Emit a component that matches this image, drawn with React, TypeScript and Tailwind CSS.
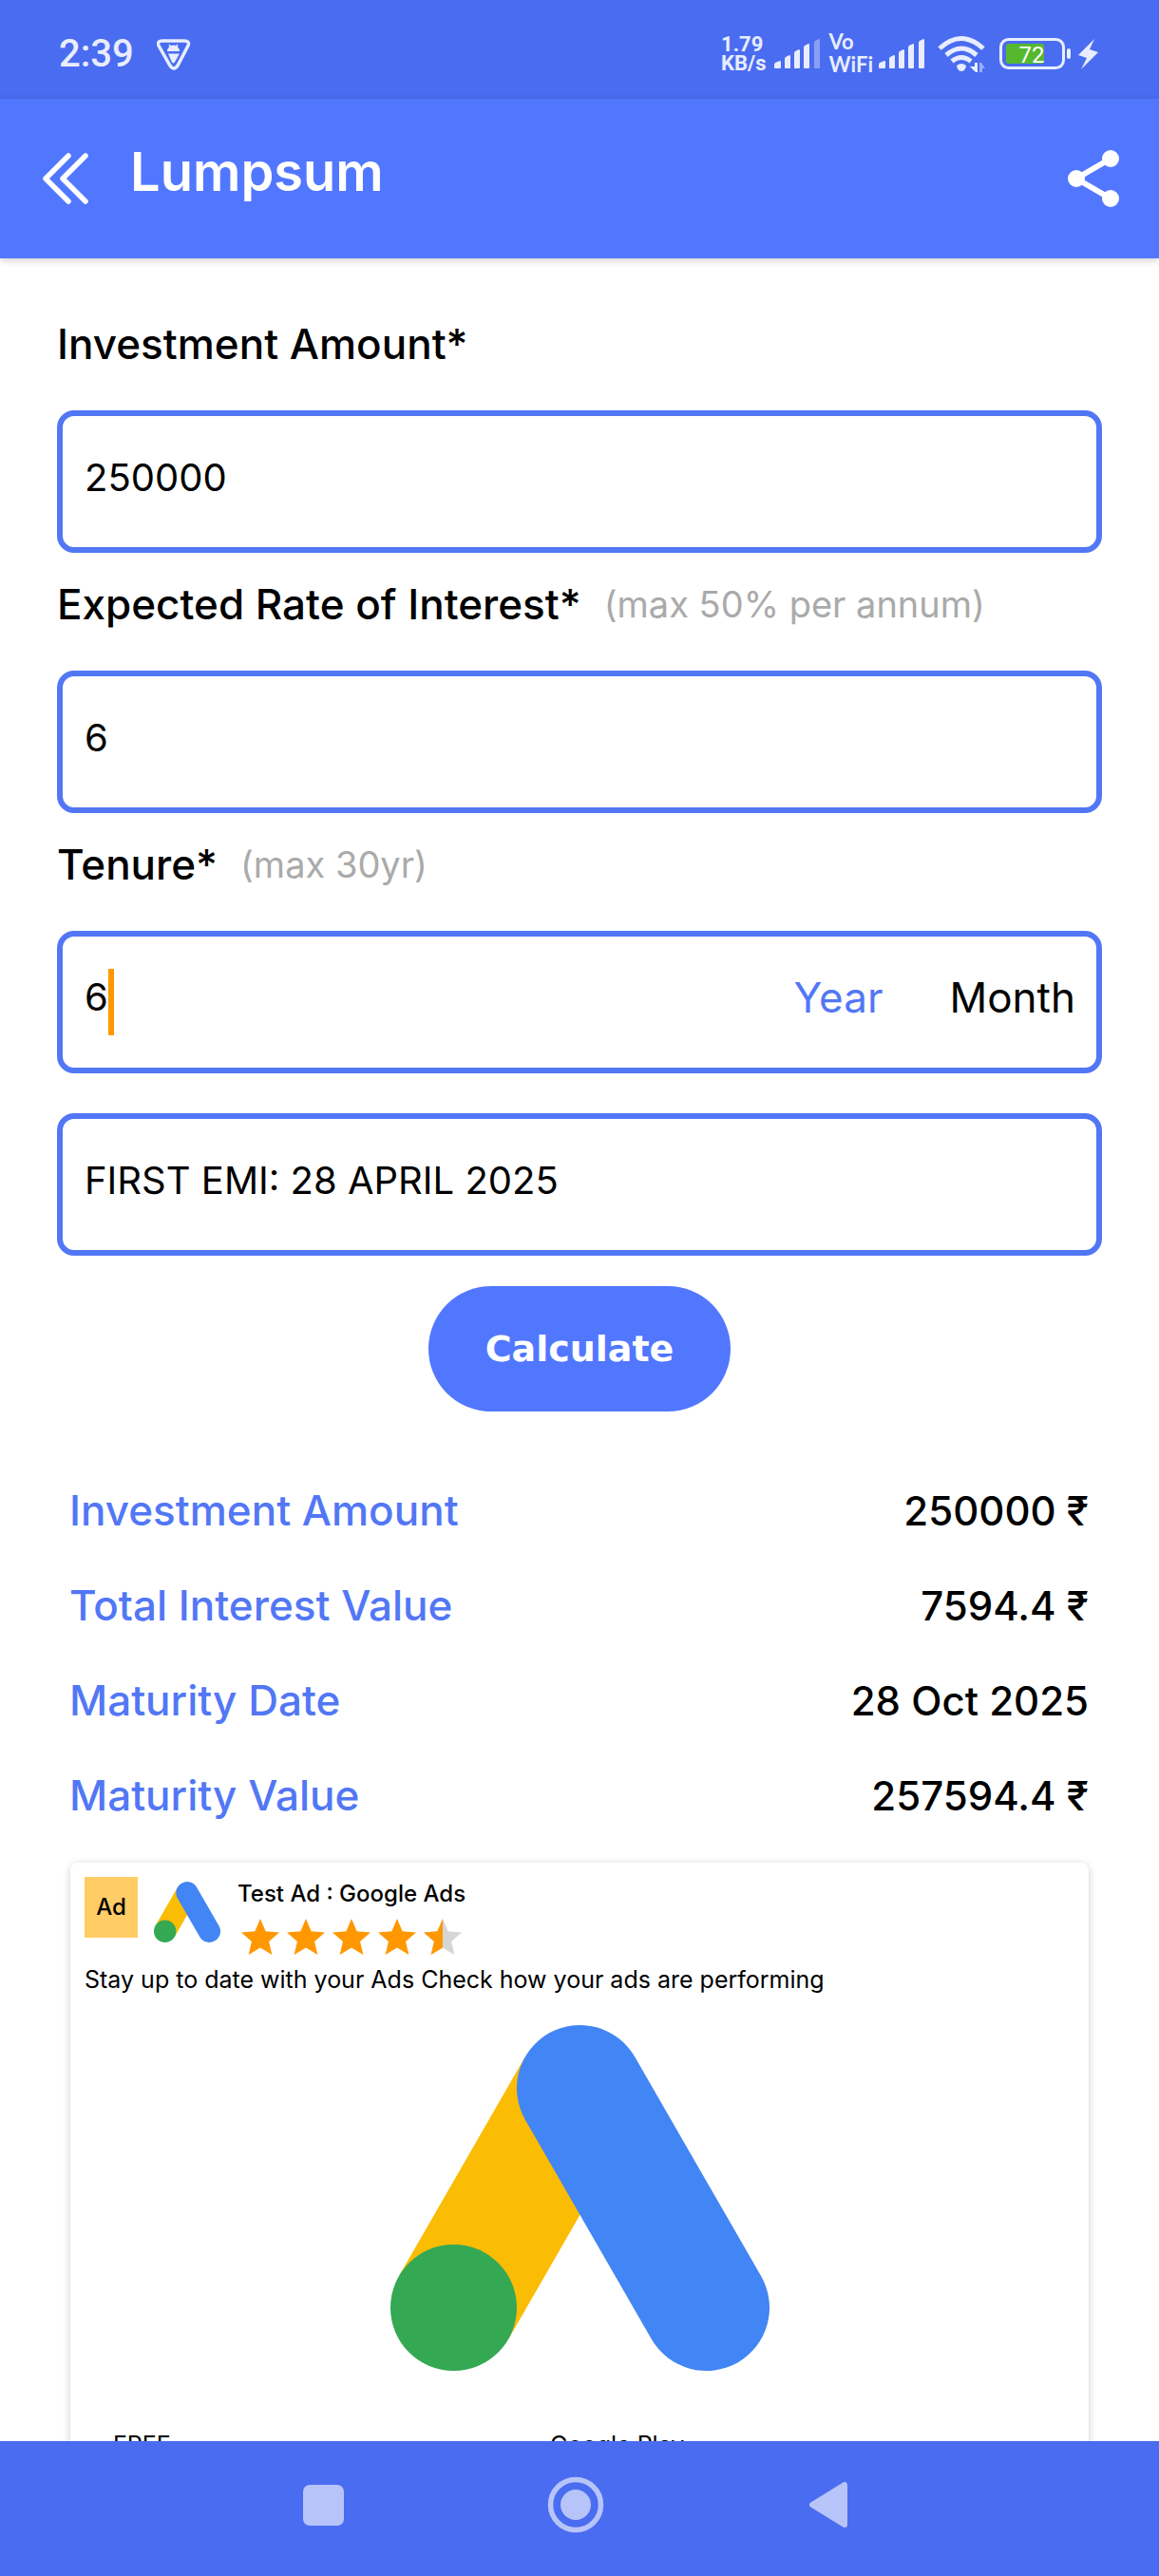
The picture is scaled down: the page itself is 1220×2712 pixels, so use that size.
import React, { useState } from 'react';

const results = [
  { label: 'Investment Amount', value: '250000 ₹' },
  { label: 'Total Interest Value', value: '7594.4 ₹' },
  { label: 'Maturity Date', value: '28 Oct 2025' },
  { label: 'Maturity Value', value: '257594.4 ₹' },
];

const SignalBars: React.FC<{ weak?: boolean }> = ({ weak }) => (
  <svg width="50" height="32" viewBox="0 0 50 32" fill="#e8edff" aria-hidden="true">
    <path d="M0 27q0-1 1-2l5-2q1 0 1 1v6q0 1-1 1H1q-1 0-1-1z" />
    <path d="M11 21q0-1 1-2l4-2q1 0 1 1v12q0 1-1 1h-4q-1 0-1-1z" />
    <path d="M21 15q0-1 1-2l4-2q1 0 1 1v18q0 1-1 1h-4q-1 0-1-1z" />
    <path d="M31 9q0-1 1-2l4-2q1 0 1 1v24q0 1-1 1h-4q-1 0-1-1z" />
    <path opacity={weak ? 0.4 : 1} d="M42 4q0-1 1-2l4-2q1 0 1 1v29q0 1-1 1h-4q-1 0-1-1z" />
  </svg>
);

const StatusBar: React.FC = () => (
  <div className="flex h-[104px] shrink-0 items-center justify-between bg-[#4a6cf0] pt-[10px] pr-[60px] pl-[62px] font-[Roboto,sans-serif] text-[#e8edff]">
    <div className="flex items-center gap-6">
      <span className="text-[40px] leading-[48px] font-medium">2:39</span>
      <svg width="36" height="33" viewBox="0 0 36 33" aria-hidden="true">
        <path
          d="M6 2h23q6 0 4 5L22 28q-4 6-8 0L2 7Q0 2 6 2z"
          fill="none"
          stroke="#e8edff"
          strokeWidth="3.5"
        />
        <path d="M11 13a6.500 6.500 0 0 1 13 0zM12 15.500h12l-5 9q-1.500 2-3 0z" fill="#e8edff" />
        <path d="M13 6l2 3M22 6l-2 3" stroke="#e8edff" strokeWidth="1.500" />
      </svg>
    </div>

    <div className="flex items-center">
      <div className="mr-2 flex flex-col text-[22px] leading-[20px] font-bold">
        <span>1.79</span>
        <span>KB/s</span>
      </div>
      <SignalBars weak />
      <div className="mr-[6px] ml-[8px] flex flex-col pb-[2px] font-[Lato,sans-serif] text-[22px] leading-[24px] font-bold">
        <span>Vo</span>
        <span>WiFi</span>
      </div>
      <SignalBars />
      <svg className="ml-3" width="52" height="40" viewBox="0 0 52 40" aria-hidden="true">
        <g fill="none" stroke="#e8edff" strokeWidth="5">
          <path d="M2 14q23-21 46 0" />
          <path d="M9 21q16-14 32 0" />
          <path d="M15 27.500q10-8 20 0" />
        </g>
        <path d="M20 32q5-4 10 0-1 6-5 6t-5-6z" fill="#e8edff" />
        <path d="M39 29h3v10h-2l-6-6h5z" fill="#e8edff" />
        <path d="M44 39V29h2l4 6h-3v4z" fill="#e8edff" opacity="0.5" />
      </svg>
      <svg className="ml-[13px]" width="108" height="34" viewBox="0 0 108 34" aria-hidden="true">
        <rect x="1.500" y="1.500" width="66" height="30" rx="8" fill="none" stroke="#e8edff" strokeWidth="3" />
        <rect x="7" y="6" width="40" height="21" rx="3" fill="#55b82e" />
        <rect x="71" y="11" width="4" height="11" rx="2" fill="#e8edff" />
        <text x="34" y="26" textAnchor="middle" fontSize="24" fill="#fff">
          72
        </text>
        <path d="M100 1L83 18l9 3-6 12 18-18-9-3z" fill="#e8edff" />
      </svg>
    </div>
  </div>
);

const AdsLogo: React.FC<{ className: string }> = ({ className }) => (
  <svg className={className} viewBox="0 0 399 364" aria-hidden="true">
    <path d="M66.500 297.500L199.500 66.500" stroke="#fbbc04" strokeWidth="133" />
    <path d="M199.500 66.500L332.500 297.500" stroke="#4285f4" strokeWidth="133" strokeLinecap="round" />
    <circle cx="66.500" cy="297.500" r="66.500" fill="#34a853" />
  </svg>
);

const Star: React.FC<{ half?: boolean }> = ({ half }) => (
  <svg width="40" height="38" viewBox="2 2 20 19" aria-hidden="true">
    <path
      d="M12 17.270L18.180 21l-1.640-7.030L22 9.240l-7.190-.610L12 2 9.190 8.630 2 9.240l5.460 4.730L5.820 21z"
      fill={half ? '#d6d6d6' : '#ff9800'}
    />
    {half && <path d="M12 17.270V2L9.190 8.630 2 9.240l5.460 4.730L5.820 21z" fill="#ff9800" />}
  </svg>
);

const labelText = 'text-[44px] leading-[60px] font-medium text-black';
const hintText = 'text-[38px] leading-[60px] text-[#aaaaaa]';
const inputBox =
  'block h-[150px] w-full rounded-[18px] border-[6px] border-[#5277f5] bg-white pr-[22px] pb-[10px] pl-[23px] text-[40px] text-black outline-none';

const App: React.FC = () => {
  const [amount, setAmount] = useState('250000');
  const [rate, setRate] = useState('6');
  const [tenure, setTenure] = useState('6');
  const [unit, setUnit] = useState('year');

  return (
    <div className="flex h-screen flex-col bg-white font-[Inter,sans-serif] text-black">
      <StatusBar />

      <header className="z-10 flex h-[168px] shrink-0 items-center bg-[#5277ff] px-[38px] shadow-[0_2px_8px_rgba(0,0,0,0.2)]">
        <button type="button" aria-label="Back">
          <svg width="62" height="62" viewBox="0 0 62 62" fill="none" stroke="#fff" strokeWidth="5.500" strokeLinecap="round" strokeLinejoin="round">
            <path d="M34 7L10 31l24 24M52 7L28 31l24 24" />
          </svg>
        </button>
        <h1 className="flex-1 pb-[14px] pl-[37px] text-[56px] leading-[72px] font-semibold text-white">Lumpsum</h1>
        <button type="button" aria-label="Share">
          <svg width="62" height="62" viewBox="0 0 62 62" fill="#fff">
            <path d="M49 10L13 31l36 21" fill="none" stroke="#fff" strokeWidth="6" />
            <circle cx="49" cy="10" r="9" />
            <circle cx="13" cy="31" r="9" />
            <circle cx="49" cy="52" r="9" />
          </svg>
        </button>
      </header>

      <main className="min-h-0 flex-1 overflow-hidden px-[60px] pt-9">
        <form onSubmit={(e) => e.preventDefault()}>
          <div className="flex pt-6 pb-10">
            <label htmlFor="amount" className={labelText}>
              Investment Amount*
            </label>
          </div>
          <input id="amount" className={inputBox} value={amount} onChange={(e) => setAmount(e.target.value)} />

          <div className="flex gap-6 pt-6 pb-10">
            <label htmlFor="rate" className={labelText}>
              Expected Rate of Interest*
            </label>
            <span className={hintText}>(max 50% per annum)</span>
          </div>
          <input id="rate" className={inputBox} value={rate} onChange={(e) => setRate(e.target.value)} />

          <div className="flex gap-6 pt-6 pb-10">
            <label htmlFor="tenure" className={labelText}>
              Tenure*
            </label>
            <span className={hintText}>(max 30yr)</span>
          </div>
          <div className="flex h-[150px] items-center rounded-[18px] border-[6px] border-[#5277f5] pr-[22px] pl-[23px]">
            <input
              id="tenure"
              className="field-sizing-content pb-[10px] text-[40px] outline-none"
              value={tenure}
              onChange={(e) => setTenure(e.target.value)}
            />
            <span className="h-[70px] w-[6px] bg-[#ff9800]" />
            <div className="ml-auto flex gap-[70px] pb-[10px] text-[44px]">
              <button type="button" onClick={() => setUnit('year')} className={unit === 'year' ? 'text-[#5277f5]' : 'text-black'}>
                Year
              </button>
              <button type="button" onClick={() => setUnit('month')} className={unit === 'month' ? 'text-[#5277f5]' : 'text-black'}>
                Month
              </button>
            </div>
          </div>

          <input className={`${inputBox} mt-[42px]`} aria-label="First EMI date" readOnly value="FIRST EMI: 28 APRIL 2025" />

          <button
            type="submit"
            className="mx-auto mt-8 block h-[132px] w-[318px] rounded-full bg-[#5277ff] font-['DejaVu_Sans',sans-serif] text-[38px] font-bold text-white"
          >
            Calculate
          </button>
        </form>

        <table className="mt-[54px] w-full font-medium">
          <tbody>
            {results.map((row) => (
              <tr key={row.label} className="h-[100px]">
                <th scope="row" className="pl-[13px] text-left text-[44px] font-medium text-[#5277f5]">
                  {row.label}
                </th>
                <td className="pr-[14px] text-right text-[42px]">{row.value}</td>
              </tr>
            ))}
          </tbody>
        </table>

        <section className="mx-[14px] mt-[21px] rounded-lg p-[15px] pb-20 text-[25px] leading-9 shadow-[0_2px_8px_rgba(0,0,0,0.2)]">
          <div className="flex">
            <span className="flex h-16 w-14 items-center justify-center bg-[#ffcc66] text-[24px] font-medium">Ad</span>
            <AdsLogo className="mt-[5px] ml-[17px] h-16 w-[70px]" />
            <div className="ml-[18px]">
              <h2 className="text-[24px] font-medium">Test Ad : Google Ads</h2>
              <div className="mt-2 ml-1 flex gap-2" role="img" aria-label="4.5 out of 5 stars">
                <Star />
                <Star />
                <Star />
                <Star />
                <Star half />
              </div>
            </div>
          </div>
          <p className="mt-2">Stay up to date with your Ads Check how your ads are performing</p>
          <AdsLogo className="mx-auto mt-[30px] h-[364px] w-[399px]" />
          <div className="mt-[60px] flex pl-[30px]">
            <span className="w-[460px]">FREE</span>
            <span>Google Play</span>
          </div>
        </section>
      </main>

      <nav className="flex h-[142px] shrink-0 items-center justify-center bg-[#4a6cf0] pr-2 pb-2">
        <button type="button" aria-label="Recent apps" className="flex w-[266px] justify-center">
          <span className="h-[43px] w-[43px] rounded-[7px] bg-[#b7c4f9]" />
        </button>
        <button type="button" aria-label="Home" className="flex w-[266px] justify-center">
          <svg width="60" height="60" viewBox="0 0 60 60">
            <circle cx="30" cy="30" r="26.500" fill="none" stroke="#b7c4f9" strokeWidth="5.500" />
            <circle cx="30" cy="30" r="16" fill="#b7c4f9" />
          </svg>
        </button>
        <button type="button" aria-label="Back" className="flex w-[266px] justify-center">
          <svg width="40" height="50" viewBox="0 0 40 50" fill="#b7c4f9" stroke="#b7c4f9" strokeWidth="6" strokeLinejoin="round">
            <path d="M37 4v42L3 25z" />
          </svg>
        </button>
      </nav>
    </div>
  );
};

export default App;
